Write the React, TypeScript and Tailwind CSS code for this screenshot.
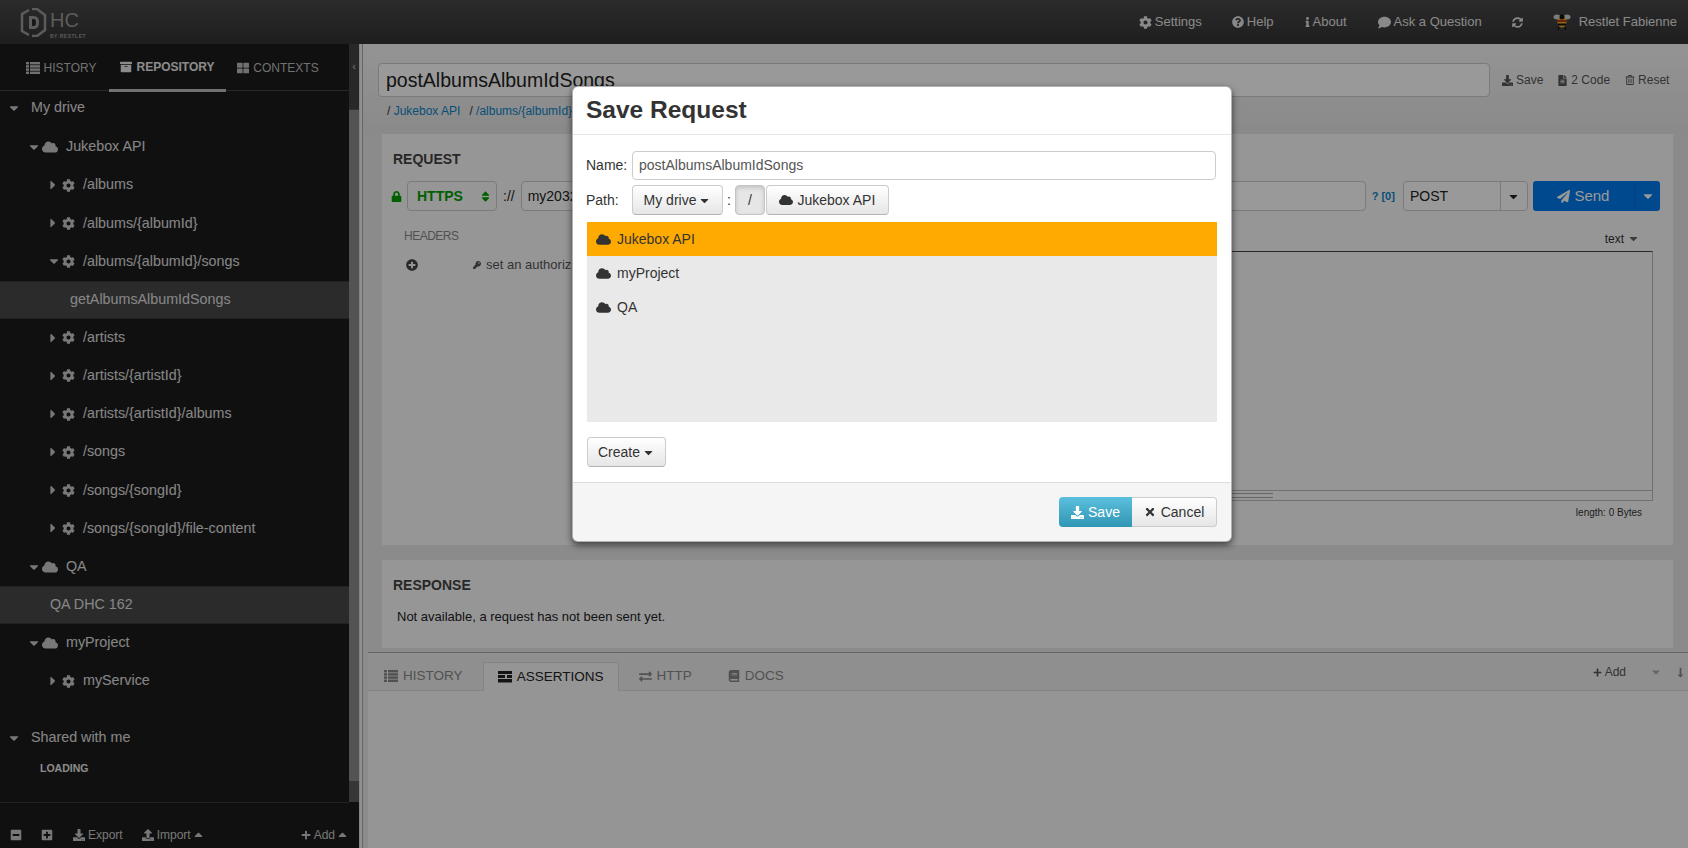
import React from 'react';
import {
  FaArchive,
  FaBook,
  FaCaretDown,
  FaCaretRight,
  FaCaretUp,
  FaCloud,
  FaCog,
  FaComment,
  FaDownload,
  FaExchangeAlt,
  FaInfo,
  FaKey,
  FaLock,
  FaMinusSquare,
  FaPaperPlane,
  FaPlus,
  FaPlusCircle,
  FaPlusSquare,
  FaQuestionCircle,
  FaFileAlt,
  FaRegTrashAlt,
  FaSyncAlt,
  FaThLarge,
  FaTimes,
  FaUpload,
  FaSort,
  FaLongArrowAltDown,
} from 'react-icons/fa';

const Logo = () => (
  <div className="flex items-center ml-5">
    <svg width="27" height="29" viewBox="0 0 27 29" fill="none">
      <path d="M9 2 L2 6 V23 L9 27" stroke="#9a9a9a" strokeWidth="2.5" fill="none" />
      <path d="M12 1 L17 1 L25 7 V22 L17 28 L12 28" stroke="#9a9a9a" strokeWidth="2.5" fill="none" />
      <path d="M9 8 H14 Q19 8 19 14.5 Q19 21 14 21 H9 Z" fill="#9a9a9a" />
      <path d="M12 11 H14 Q16 11 16 14.5 Q16 18 14 18 H12 Z" fill="#2a2a2a" />
    </svg>
    <div className="ml-[3px] flex flex-col text-[#9a9a9a]">
      <span className="text-[20px] leading-[20px] mt-[4px]">HC</span>
      <span className="text-[5px] leading-[6px] mt-[3px] font-bold tracking-[0.5px]">BY RESTLET</span>
    </div>
  </div>
);

const Bee = () => (
  <svg width="18" height="18" viewBox="0 0 18 18">
    <ellipse cx="4" cy="4" rx="3.5" ry="2.5" fill="#cfcfcf" />
    <ellipse cx="14" cy="4" rx="3.5" ry="2.5" fill="#cfcfcf" />
    <ellipse cx="9" cy="9" rx="4.5" ry="5.5" fill="#e8b020" />
    <rect x="5" y="7" width="8" height="2" fill="#c03020" />
    <rect x="5" y="10.5" width="8" height="2" fill="#111" />
    <circle cx="9" cy="4" r="2.5" fill="#111" />
    <path d="M6 14 L5 17 M12 14 L13 17" stroke="#111" strokeWidth="1.2" />
  </svg>
);

// the old font-awesome list icon, heavier than the one in the packages
const ListIcon = () => (
  <svg width="14" height="12" viewBox="0 0 14 12" fill="currentColor">
    <rect x="0" y="0" width="3" height="2.4" />
    <rect x="4" y="0" width="10" height="2.4" />
    <rect x="0" y="3.2" width="3" height="2.4" />
    <rect x="4" y="3.2" width="10" height="2.4" />
    <rect x="0" y="6.4" width="3" height="2.4" />
    <rect x="4" y="6.4" width="10" height="2.4" />
    <rect x="0" y="9.6" width="3" height="2.4" />
    <rect x="4" y="9.6" width="10" height="2.4" />
  </svg>
);

const TasksIcon = () => (
  <svg width="14" height="12" viewBox="0 0 14 12" fill="currentColor">
    <rect x="0" y="0" width="14" height="3" />
    <rect x="0" y="4" width="7" height="3" />
    <rect x="9" y="4" width="5" height="3" />
    <rect x="0" y="8" width="14" height="3.5" />
  </svg>
);

const HeaderLink = ({ icon, label, gap }: { icon: React.ReactNode; label: string; gap: string }) => (
  <div className={`flex items-center gap-[3px] ${gap}`}>
    {icon}
    <span>{label}</span>
  </div>
);

const Header = () => (
  <div className="h-11 shrink-0 flex items-center bg-gradient-to-b from-[#484848] to-[#333333] text-[13px] text-[#e4e4e4]">
    <Logo />
    <div className="ml-auto flex items-center pr-[11px]">
      <HeaderLink icon={<FaCog className="text-[13px]" />} label="Settings" gap="mr-[30px]" />
      <HeaderLink icon={<FaQuestionCircle className="text-[12px]" />} label="Help" gap="mr-[31px]" />
      <HeaderLink icon={<FaInfo className="text-[10px] w-[5px]" />} label="About" gap="mr-[31px]" />
      <HeaderLink icon={<FaComment className="text-[13px]" />} label="Ask a Question" gap="mr-[30px]" />
      <FaSyncAlt className="text-[11px] mr-[30px]" />
      <Bee />
      <span className="ml-[8px]">Restlet Fabienne</span>
    </div>
  </div>
);

const SideTab = ({
  icon,
  label,
  active,
  className,
}: {
  icon: React.ReactNode;
  label: string;
  active?: boolean;
  className: string;
}) => (
  <div
    className={`flex items-center justify-center gap-[4px] h-[48px] ${className} ${
      active ? 'font-bold text-[#e8e8e8] border-b-[3px] border-[#bdbdbd]' : 'text-[#bdbdbd]'
    }`}
  >
    {icon}
    <span>{label}</span>
  </div>
);

type TreeRow = {
  label: string;
  level: number;
  open?: boolean;
  icon?: 'cloud' | 'gear';
  selected?: boolean;
};

const rows: TreeRow[] = [
  { label: 'Jukebox API', level: 1, open: true, icon: 'cloud' },
  { label: '/albums', level: 2, icon: 'gear' },
  { label: '/albums/{albumId}', level: 2, icon: 'gear' },
  { label: '/albums/{albumId}/songs', level: 2, open: true, icon: 'gear' },
  { label: 'getAlbumsAlbumIdSongs', level: 3, selected: true },
  { label: '/artists', level: 2, icon: 'gear' },
  { label: '/artists/{artistId}', level: 2, icon: 'gear' },
  { label: '/artists/{artistId}/albums', level: 2, icon: 'gear' },
  { label: '/songs', level: 2, icon: 'gear' },
  { label: '/songs/{songId}', level: 2, icon: 'gear' },
  { label: '/songs/{songId}/file-content', level: 2, icon: 'gear' },
  { label: 'QA', level: 1, open: true, icon: 'cloud' },
  { label: 'QA DHC 162', level: 4, selected: true },
  { label: 'myProject', level: 1, open: true, icon: 'cloud' },
  { label: 'myService', level: 2, icon: 'gear' },
];

const Row = ({ row }: { row: TreeRow }) => {
  if (row.level === 3 || row.level === 4) {
    return (
      <div
        className={`h-[38.15px] flex items-center bg-[#484848] border-y border-[#3a3a3a] ${
          row.level === 3 ? 'pl-[70px]' : 'pl-[50px]'
        }`}
      >
        {row.label}
      </div>
    );
  }
  const cloud = row.level === 1;
  return (
    <div className={`h-[38.15px] flex items-center ${cloud ? 'pl-[29px]' : 'pl-[49px]'}`}>
      {row.open ? (
        <FaCaretDown className="text-[14px] w-[10px] text-[#c8c8c8]" />
      ) : (
        <FaCaretRight className="text-[14px] w-[8px] text-[#c8c8c8]" />
      )}
      {cloud ? (
        <FaCloud className="text-[16px] ml-[3px] text-[#c8c8c8]" />
      ) : (
        <FaCog className={`text-[13px] text-[#c8c8c8] ${row.open ? 'ml-[3px]' : 'ml-[5px]'}`} />
      )}
      <span className="ml-[8px]">{row.label}</span>
    </div>
  );
};

const Sidebar = () => (
  <div className="w-[359px] shrink-0 flex flex-col bg-[#1c1c1c] text-[14.3px] text-[#e0e0e0]">
    <div className="flex flex-1 min-h-0">
      <div className="w-[349px] shrink-0 flex flex-col">
        <div className="flex h-[47px] border-b border-[#444] text-[12px]">
          <div className="w-[109px] pl-[13px] flex justify-center">
            <SideTab icon={<ListIcon />} label="HISTORY" className="" />
          </div>
          <SideTab
            icon={<FaArchive className="text-[12px]" />}
            label="REPOSITORY"
            active
            className="w-[117px]"
          />
          <div className="w-[118px] pr-[14px] flex justify-center">
            <SideTab icon={<FaThLarge className="text-[12px]" />} label="CONTEXTS" className="" />
          </div>
        </div>
        <div className="h-[34px] mb-[3px] flex items-center pl-[7px]">
          <FaCaretDown className="text-[14px] text-[#c8c8c8]" />
          <span className="ml-[10px]">My drive</span>
        </div>
        {rows.map((row) => (
          <Row key={row.label} row={row} />
        ))}
        <div className="h-[38px] mt-[19px] flex items-center pl-[7px]">
          <FaCaretDown className="text-[14px] text-[#c8c8c8]" />
          <span className="ml-[10px]">Shared with me</span>
        </div>
        <div className="pl-[40px] mt-[4px] text-[10.5px] font-bold text-[#e8e8e8]">LOADING</div>
      </div>
      <div className="w-[10px] shrink-0 flex flex-col">
        <div className="h-[66px] bg-[#444] flex items-center justify-center text-[#c0c0c0] text-[11px] border-b border-[#555]">
          <span className="mb-[20px]">‹</span>
        </div>
        <div className="h-[671px] bg-[#8a8a8a]" />
        <div className="flex-1 bg-[#5a5a5a]" />
      </div>
    </div>
    <div className="h-[46px] shrink-0 flex items-center text-[12px] text-[#c8c8c8]">
      <div className="w-[349px] h-full border-t border-[#3a3a3a] flex items-center pl-[10px] pt-[18px]">
        <FaMinusSquare className="text-[12px]" />
        <FaPlusSquare className="text-[12px] ml-[19px]" />
        <FaDownload className="text-[12px] ml-[20px]" />
        <span className="ml-[3px]">Export</span>
        <FaUpload className="text-[12px] ml-[19px]" />
        <span className="ml-[3px]">Import</span>
        <FaCaretUp className="text-[13px] ml-[1px]" />
        <FaPlus className="text-[10px] ml-auto" />
        <span className="ml-[3px]">Add</span>
        <FaCaretUp className="text-[13px] ml-[1px]" />
      </div>
    </div>
  </div>
);

const TopBar = () => (
  <div className="h-[90px] shrink-0 bg-gradient-to-b from-[#f6f6f6] to-[#e6e6e6] pl-[15px]">
    <div className="flex items-center pt-[19px]">
      <div className="w-[1112px] h-[34px] bg-white border border-[#ccc] rounded-[4px] pl-[7px] pt-px flex items-center text-[19.5px] text-[#222]">
        postAlbumsAlbumIdSongs
      </div>
      <div className="flex items-center text-[12px] text-[#555] ml-[12px]">
        <FaDownload className="text-[11px]" />
        <span className="ml-[3px]">Save</span>
        <FaFileAlt className="text-[11px] ml-[14px]" />
        <span className="ml-[3px]">2 Code</span>
        <FaRegTrashAlt className="text-[10px] ml-[15px]" />
        <span className="ml-[3px]">Reset</span>
      </div>
    </div>
    <div className="pl-[9px] mt-[6px] text-[12px] leading-[16px] text-[#333]">
      / <span className="text-[#0a84c8]">Jukebox API</span>
      <span className="ml-[9px]">/ </span>
      <span className="text-[#0a84c8]">/albums/{'{albumId}'}</span>
    </div>
  </div>
);

const RequestPanel = () => (
  <div className="h-[411px] bg-[#fbfbfb] px-[11px] text-[#222] flex flex-col">
    <div className="font-bold text-[14px] text-[#444] mt-[16px] leading-[18px]">REQUEST</div>
    <div className="flex items-center mt-[13px] h-[30px] -ml-[2px]">
      <FaLock className="text-[11px] text-[#00a000]" />
      <div className="ml-[5px] w-[90px] h-[30px] border border-[#ccc] rounded-[4px] flex items-center pl-[9px] pr-[4px] font-bold text-[14px] text-[#00a000]">
        HTTPS
        <FaSort className="ml-auto text-[13px]" />
      </div>
      <span className="ml-[6px] text-[14px]">://</span>
      <div className="ml-[6px] w-[845px] h-[30px] bg-white border border-[#ccc] rounded-[4px] flex items-center pl-[6px] text-[14px]">
        my2032
      </div>
      <span className="ml-[6px] text-[11px] font-bold text-[#0a84c8]">? [0]</span>
      <div className="ml-[8px] w-[125px] h-[30px] bg-white border border-[#ccc] rounded-[4px] flex items-center text-[14px]">
        <span className="pl-[6px]">POST</span>
        <div className="ml-auto w-[27px] h-full border-l border-[#ccc] flex items-center justify-center">
          <FaCaretDown className="text-[13px]" />
        </div>
      </div>
      <div className="ml-[5px] w-[127px] h-[30px] bg-[#007bee] rounded-[3px] flex items-center text-white font-medium text-[15px]">
        <div className="w-[102px] flex items-center justify-center gap-[4px] h-full border-r border-[#0a6bd0]">
          <FaPaperPlane className="text-[13px]" />
          Send
        </div>
        <FaCaretDown className="text-[14px] ml-[6px]" />
      </div>
    </div>
    <div className="flex flex-1 mt-[10px]">
      <div className="w-[440px]">
        <div className="pl-[11px] mt-[6px] text-[12px] text-[#888] tracking-[-0.5px]">HEADERS</div>
        <div className="flex items-center mt-[10px] pl-[13px] text-[13px] text-[#555]">
          <FaPlusCircle className="text-[12px] text-[#444]" />
          <FaKey className="text-[8px] ml-[55px]" />
          <span className="ml-[5px] whitespace-nowrap">set an authorization</span>
        </div>
      </div>
      <div className="flex-1 flex flex-col items-end pr-[9px]">
        <div className="flex items-center h-[30px] pt-[5px] text-[12px] mr-[13px] text-[#333]">
          text
          <FaCaretDown className="ml-[3px] text-[13px] text-[#666]" />
        </div>
        <div className="w-full h-[250px] border border-[#bbb] border-t-[#444] flex flex-col justify-end">
          <div className="h-[10px] border-t border-[#bbb]">
            <div className="w-[439px] h-[5px] mt-[2px] border-y border-[#aaa]" />
          </div>
        </div>
        <div className="text-[10px] mt-[5px] mr-[11px] leading-[13px] text-[#333]">length: 0 Bytes</div>
      </div>
    </div>
  </div>
);

const BottomTab = ({
  icon,
  label,
  className,
}: {
  icon: React.ReactNode;
  label: string;
  className: string;
}) => (
  <div className={`flex items-center gap-[5px] text-[#888] ${className}`}>
    {icon}
    <span>{label}</span>
  </div>
);

const Workspace = () => (
  <div className="flex-1 min-w-0 flex flex-col border-l border-[#ddd] bg-[#f0f0f0] relative">
    <div className="ml-[2px] border-l border-[#aaa] flex-1 flex flex-col bg-[#e8e8e8]">
      <TopBar />
      <div className="pl-[19px] pr-[15px] bg-[#e8e8e8]">
        <RequestPanel />
        <div className="h-[15px]" />
        <div className="h-[88px] bg-[#fbfbfb] px-[11px]">
          <div className="font-bold text-[14px] text-[#444] pt-[16px] leading-[18px]">RESPONSE</div>
          <div className="pl-[4px] mt-[14px] text-[13px] leading-[18px] text-[#222]">
            Not available, a request has not been sent yet.
          </div>
        </div>
      </div>
      <div className="h-[4px] bg-[#e8e8e8]" />
      <div className="ml-[5px] flex-1 flex flex-col border-t border-[#aaa] bg-[#f8f8f8]">
        <div className="h-[38px] shrink-0 flex items-end border-b border-[#ddd] bg-[#eeeeee] text-[13.5px] pl-[16px]">
          <BottomTab icon={<ListIcon />} label="HISTORY" className="h-[28px] mr-[20px]" />
          <div className="h-[29px] w-[136px] -mb-px bg-[#f8f8f8] border border-b-0 border-[#ddd] rounded-t-[3px] flex items-center justify-center gap-[5px] text-[#222]">
            <TasksIcon />
            ASSERTIONS
          </div>
          <BottomTab
            icon={<FaExchangeAlt className="text-[13px]" />}
            label="HTTP"
            className="h-[28px] ml-[20px]"
          />
          <BottomTab icon={<FaBook className="text-[12px]" />} label="DOCS" className="h-[28px] ml-[36px]" />
          <div className="ml-auto h-[28px] mb-[4px] flex items-center text-[12px] text-[#555]">
            <FaPlus className="text-[9px]" />
            <span className="ml-[3px]">Add</span>
            <FaCaretDown className="ml-[24px] text-[12px] text-[#aaa]" />
            <FaLongArrowAltDown className="ml-[13px] mr-[2px] text-[11px] text-[#888]" />
          </div>
        </div>
      </div>
    </div>
  </div>
);

const btn =
  'flex items-center h-[30px] rounded-[4px] border border-[#ccc] border-b-[#b3b3b3] bg-gradient-to-b from-white to-[#e6e6e6] text-[14px] text-[#333]';

const SaveDialog = () => (
  <div className="absolute left-[572px] top-[86px] w-[660px] h-[456px] bg-white rounded-[6px] shadow-[0_3px_7px_rgba(0,0,0,0.6)] border border-[#666]/50 flex flex-col text-[14px] text-[#333]">
    <div className="h-[48px] shrink-0 border-b border-[#e5e5e5] flex items-center pl-[13px] pb-[1px]">
      <h3 className="text-[24.5px] font-bold text-[#333] leading-[30px]">Save Request</h3>
    </div>
    <div className="flex-1 px-[14px] pt-[15px]">
      <div className="flex items-center h-[30px]">
        <span className="w-[46px] -ml-px">Name:</span>
        <div className="w-[584px] h-[29px] border border-[#ccc] rounded-[4px] flex items-center pl-[6px] text-[#555]">
          postAlbumsAlbumIdSongs
        </div>
      </div>
      <div className="flex items-center h-[30px] mt-[5px]">
        <span className="w-[46px] -ml-px">Path:</span>
        <div className={`${btn} w-[91px] justify-center gap-[2px]`}>
          My drive
          <FaCaretDown className="text-[13px]" />
        </div>
        <span className="ml-[4px]">:</span>
        <div className="ml-[4px] w-[30px] h-[30px] rounded-[4px] border border-[#c4c4c4] bg-[#e6e6e6] shadow-[inset_0_2px_4px_rgba(0,0,0,0.15)] flex items-center justify-center">
          /
        </div>
        <div className={`${btn} ml-px w-[123px] justify-center gap-[4px]`}>
          <FaCloud className="text-[14px]" />
          Jukebox API
        </div>
      </div>
      <div className="mt-[7px] w-[630px] h-[200px] bg-[#e9e9e9]">
        <div className="h-[34px] bg-[#ffaa00] flex items-center pl-[9px] gap-[6px]">
          <FaCloud className="text-[15px]" />
          Jukebox API
        </div>
        <div className="h-[34px] flex items-center pl-[9px] gap-[6px]">
          <FaCloud className="text-[15px]" />
          myProject
        </div>
        <div className="h-[34px] flex items-center pl-[9px] gap-[6px]">
          <FaCloud className="text-[15px]" />
          QA
        </div>
      </div>
      <div className={`${btn} mt-[15px] w-[79px] justify-center gap-[2px]`}>
        Create
        <FaCaretDown className="text-[13px]" />
      </div>
    </div>
    <div className="h-[59px] shrink-0 bg-[#f5f5f5] border-t border-[#ddd] rounded-b-[6px] flex items-center justify-end pr-[14px]">
      <div className="flex items-center justify-center gap-[4px] w-[73px] h-[30px] rounded-l-[4px] bg-gradient-to-b from-[#5bc0de] to-[#2f96b4] text-white font-medium">
        <FaDownload className="text-[13px]" />
        Save
      </div>
      <div className="flex items-center justify-center gap-[5px] w-[85px] h-[30px] rounded-r-[4px] border border-[#ccc] border-l-0 bg-gradient-to-b from-white to-[#e6e6e6]">
        <FaTimes className="text-[12px]" />
        Cancel
      </div>
    </div>
  </div>
);

export default function App() {
  return (
    <div className="relative w-[1688px] h-[848px] overflow-hidden flex flex-col font-['Liberation_Sans',Arial,sans-serif]">
      <Header />
      <div className="flex flex-1 min-h-0">
        <Sidebar />
        <Workspace />
      </div>
      {/* backdrop + modal */}
      <div className="absolute inset-0 bg-black/40" />
      <SaveDialog />
    </div>
  );
}
